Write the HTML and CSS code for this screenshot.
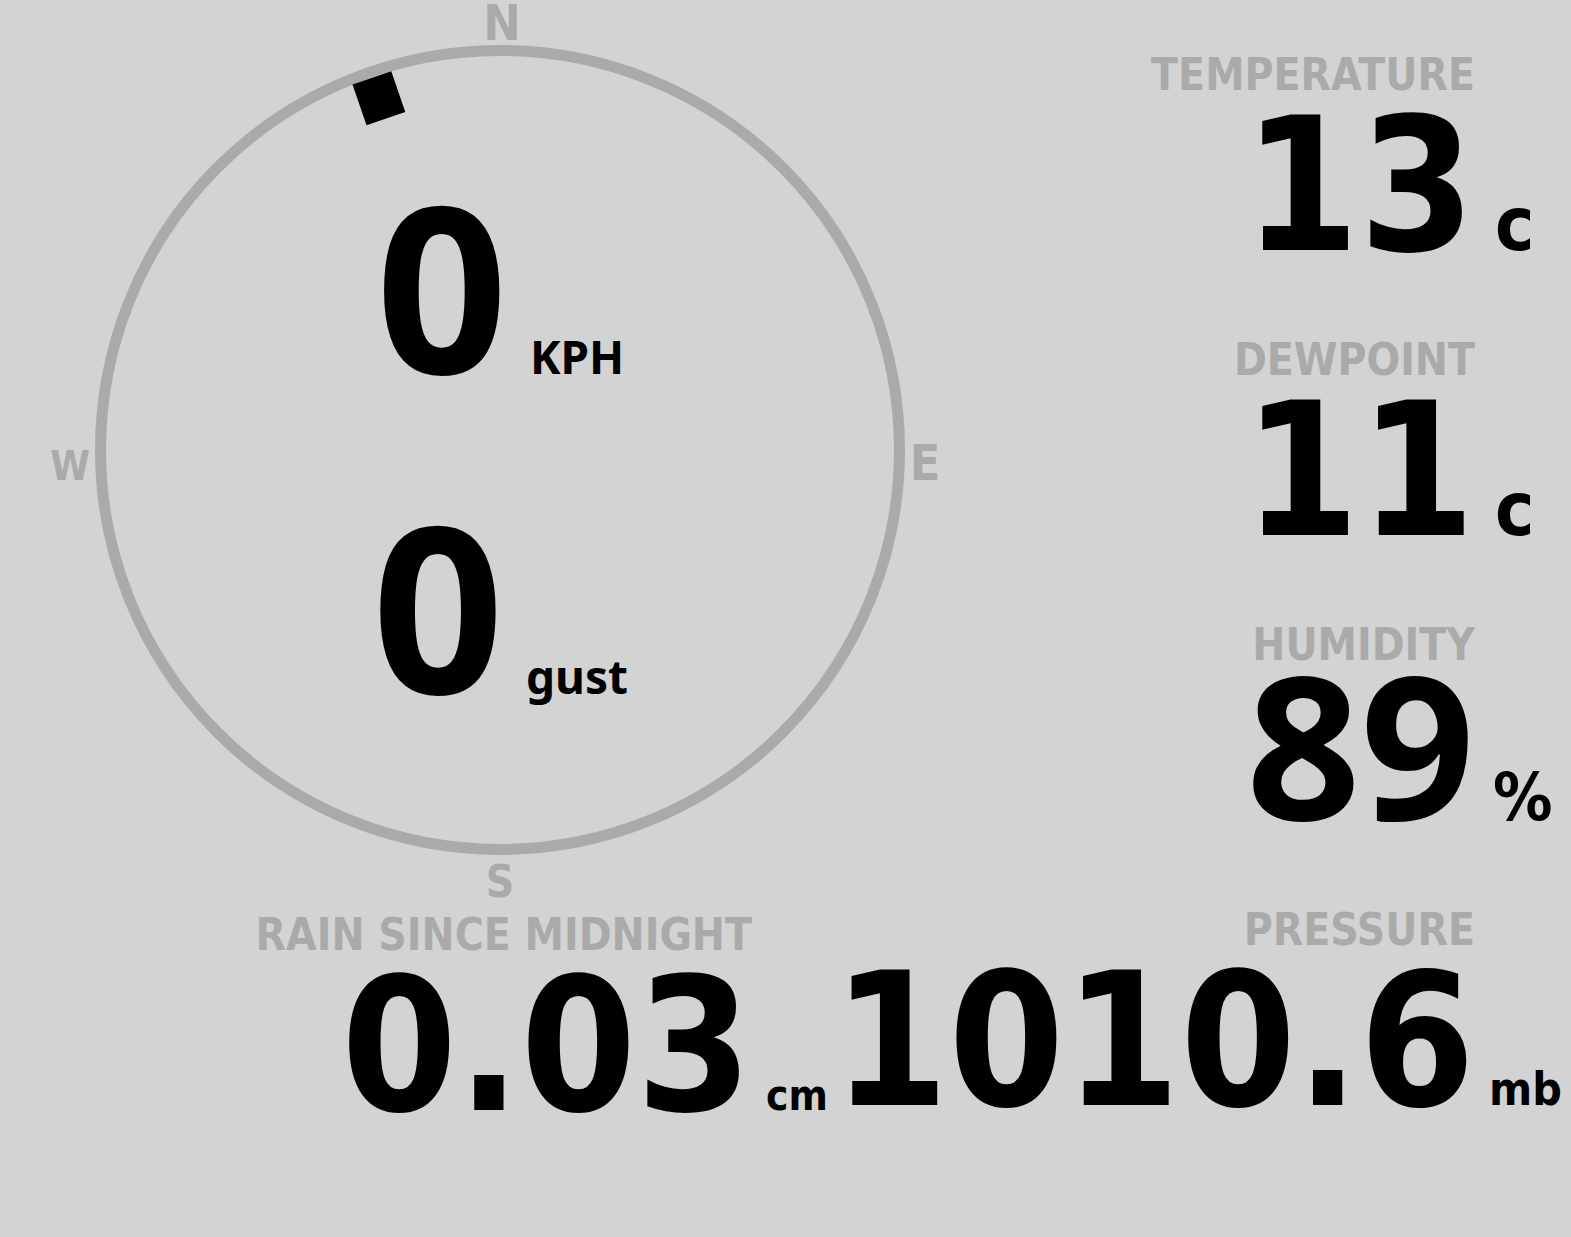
FILE: index.html
```html
<!DOCTYPE html>
<html lang="en">
<head>
  <meta charset="UTF-8">
  <meta name="viewport" content="width=device-width, initial-scale=1.0">
  <title>Weather Station</title>
  <link rel="stylesheet" href="styles.css">
</head>
<body>
  <main class="station">
    <section class="wind">
      <svg class="compass" viewBox="0 0 1000 920">
        <circle class="ring" cx="500" cy="450" r="399.5"/>
        <!-- wind bearing 341 deg -->
        <rect class="needle" x="479.5" y="56.5" width="41" height="43" transform="rotate(-19 500 450)"/>
        <text class="point" x="502" y="40">N</text>
        <text class="point" x="925" y="480">E</text>
        <text class="point small" x="500" y="897">S</text>
        <text class="point tiny" x="70" y="480">W</text>
      </svg>
      <div class="speeds">
        <div class="speed"><span class="speed-num">0</span><span class="speed-unit">KPH</span></div>
        <div class="speed"><span class="speed-num">0</span><span class="speed-unit">gust</span></div>
      </div>
    </section>

    <aside class="readings">
      <div class="reading">
        <div class="label">TEMPERATURE</div>
        <div class="value"><span class="num">13</span><span class="unit deg">c</span></div>
      </div>
      <div class="reading">
        <div class="label">DEWPOINT</div>
        <div class="value"><span class="num">11</span><span class="unit deg">c</span></div>
      </div>
      <div class="reading">
        <div class="label">HUMIDITY</div>
        <div class="value"><span class="num round">89</span><span class="unit pct">%</span></div>
      </div>
    </aside>

    <section class="reading rain">
      <div class="label">RAIN SINCE MIDNIGHT</div>
      <div class="value"><span class="num">0.03</span><span class="unit cm">cm</span></div>
    </section>

    <section class="reading pressure">
      <div class="label">PRESSURE</div>
      <div class="value"><span class="num">1010.6</span><span class="unit mb">mb</span></div>
    </section>
  </main>
</body>
</html>
```

FILE: styles.css
```css
:root {
  --bg: #d3d3d3;
  --muted: #aaaaaa;
  --ink: #000000;
  --din: "DejaVu Sans Condensed", "DejaVu Sans", sans-serif;
  --round: "Noto Sans", "DejaVu Sans", sans-serif;
}
body {
  margin: 0;
  background: var(--bg);
  color: var(--ink);
  font-family: var(--din);
  font-stretch: condensed;
  font-weight: bold;
}
.station {
  display: grid;
  grid-template-columns: 830px 170px 1fr;
}

/* compass */
.wind {
  grid-column: 1 / 3;
  position: relative;
  height: 905px;
}
.compass {
  position: absolute;
  left: 0;
  top: 0;
  width: 1000px;
  height: 920px;
  overflow: visible;
}
.ring {
  fill: none;
  stroke: var(--muted);
  stroke-width: 11;
}
.needle {
  fill: var(--ink);
}
.point {
  fill: var(--muted);
  font-family: var(--din);
  font-stretch: condensed;
  font-weight: bold;
  font-size: 50px;
  text-anchor: middle;
}
.point.small {
  font-size: 44px;
}
.point.tiny {
  font-size: 40px;
}
.speeds {
  position: relative;
  padding-top: 170px;
  display: flex;
  flex-direction: column;
  gap: 90px;
}
.speed {
  display: flex;
  justify-content: center;
  align-items: baseline;
  height: 230px;
}
.speed-num {
  font-family: var(--round);
  font-stretch: normal;
  font-size: 231px;
  line-height: 230px;
}
.speed-unit {
  font-family: var(--round);
  font-stretch: normal;
  font-size: 46px;
  line-height: 1;
  margin-left: 22px;
}

/* readings */
.readings {
  grid-column: 3;
  padding-top: 53px;
}
.reading {
  margin-bottom: 63px;
}
.label {
  font-size: 44px;
  line-height: 44px;
  color: var(--muted);
  text-align: right;
  padding-right: 96px;
  white-space: nowrap;
}
.value {
  display: flex;
  justify-content: flex-end;
  align-items: baseline;
  height: 178px;
}
.num {
  font-size: 185px;
  line-height: 178px;
  white-space: nowrap;
}
.num.round {
  font-family: var(--round);
  font-stretch: normal;
  font-size: 200px;
  line-height: 151px;
}
.unit {
  width: 96px;
  box-sizing: border-box;
  padding-left: 18px;
  font-size: 44px;
  line-height: 1;
}
.unit.deg { font-size: 74px; padding-left: 20px; }
.unit.pct { font-size: 66px; }
.unit.cm { font-size: 42px; padding-left: 14px; }
.unit.mb { font-size: 46px; padding-left: 14px; }

.rain {
  grid-column: 1;
  margin-top: 5px;
}
.rain .label {
  padding-right: 78px;
}
.rain .unit {
  width: 78px;
}
.pressure {
  grid-column: 2 / 4;
}
```
